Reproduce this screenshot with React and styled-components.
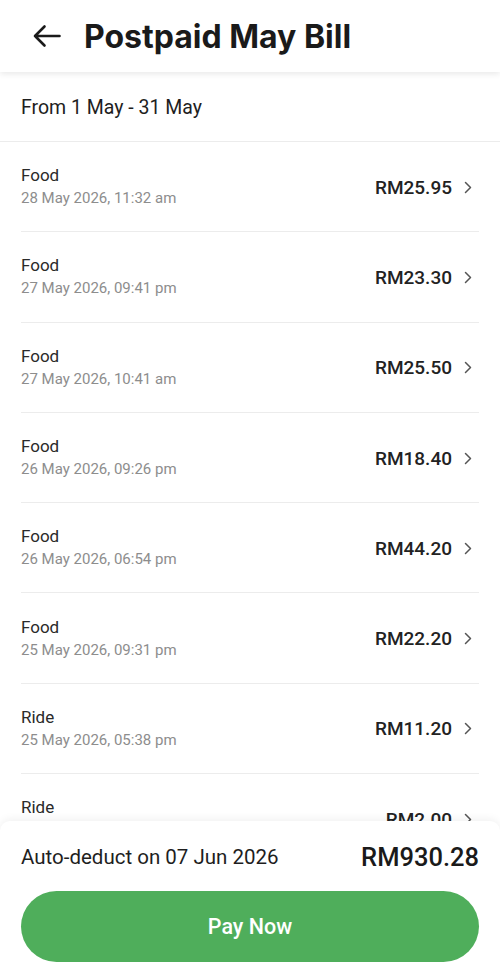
import React from "react";
import styled, { createGlobalStyle } from "styled-components";

const GlobalStyle = createGlobalStyle`
  html, body {
    margin: 0;
    padding: 0;
    background: #fff;
  }
  body {
    font-family: Roboto, "Noto Sans", Arial, sans-serif;
    color: #1c1c1c;
  }
`;

const Screen = styled.div`
  width: 500px;
  height: 974px;
  display: flex;
  flex-direction: column;
  overflow: hidden;
  background: #fff;
`;

const Header = styled.header`
  height: 72px;
  flex-shrink: 0;
  display: flex;
  align-items: center;
  gap: 23px;
  padding: 0 0 0 33px;
  background: #fff;
  box-shadow: 0 2px 6px rgba(0, 0, 0, 0.09);
  position: relative;
  z-index: 2;
`;

const BackButton = styled.button`
  border: none;
  background: none;
  padding: 0;
  display: flex;
  align-items: center;
  cursor: pointer;
`;

const Title = styled.h1`
  margin: 0;
  font-family: Inter, "Noto Sans", sans-serif;
  font-weight: 700;
  font-size: 32px;
  letter-spacing: 0;
  color: #1a1a1a;
`;

const Body = styled.div`
  flex: 1;
  overflow: hidden;
`;

const Period = styled.div`
  height: 67px;
  display: flex;
  align-items: center;
  padding: 2px 21px 0;
  font-size: 19.5px;
  color: #1e1e1e;
  border-bottom: 1px solid #ececec;
`;

const List = styled.ul`
  list-style: none;
  margin: 0;
  padding: 0 21px;
`;

const Row = styled.li`
  height: 89.3px;
  display: flex;
  align-items: center;
  justify-content: space-between;
  border-bottom: 1px solid #ececec;
`;

const Info = styled.div`
  display: flex;
  flex-direction: column;
  gap: 1px;
`;

const Kind = styled.span`
  font-size: 17px;
  line-height: 22px;
  color: #2a2a2a;
`;

const When = styled.span`
  font-size: 15px;
  line-height: 22px;
  color: #8d8d8d;
`;

const Amount = styled.div`
  display: flex;
  align-items: center;
  gap: 12px;
  padding-right: 7px;
  font-size: 19px;
  font-weight: 500;
  color: #222;
  margin-top: 1px;
`;

const Footer = styled.footer`
  flex-shrink: 0;
  background: #fff;
  border-radius: 10px 10px 0 0;
  box-shadow: 0 -2px 8px rgba(0, 0, 0, 0.06);
  padding: 21px 21px 12px;
  display: flex;
  flex-direction: column;
  gap: 19px;
  position: relative;
  z-index: 2;
`;

const Summary = styled.div`
  height: 30px;
  display: flex;
  align-items: center;
  justify-content: space-between;
`;

const DeductText = styled.span`
  font-size: 20.5px;
  color: #1e1e1e;
`;

const Total = styled.span`
  font-size: 25.5px;
  font-weight: 500;
  color: #1a1a1a;
`;

const PayButton = styled.button`
  height: 71px;
  border: none;
  border-radius: 36px;
  background: #4fae5b;
  color: #fff;
  font-family: Roboto, "Noto Sans", sans-serif;
  font-size: 21.5px;
  font-weight: 500;
  cursor: pointer;
`;

const transactions = [
  { kind: "Food", when: "28 May 2026, 11:32 am", amount: "RM25.95" },
  { kind: "Food", when: "27 May 2026, 09:41 pm", amount: "RM23.30" },
  { kind: "Food", when: "27 May 2026, 10:41 am", amount: "RM25.50" },
  { kind: "Food", when: "26 May 2026, 09:26 pm", amount: "RM18.40" },
  { kind: "Food", when: "26 May 2026, 06:54 pm", amount: "RM44.20" },
  { kind: "Food", when: "25 May 2026, 09:31 pm", amount: "RM22.20" },
  { kind: "Ride", when: "25 May 2026, 05:38 pm", amount: "RM11.20" },
  { kind: "Ride", when: "25 May 2026, 08:12 am", amount: "RM2.00" },
  { kind: "Food", when: "24 May 2026, 12:05 pm", amount: "RM19.80" },
];

function Chevron() {
  return (
    <svg width="8" height="13" viewBox="0 0 8 13" fill="none">
      <path d="M1.5 1.5 L6.5 6.5 L1.5 11.5" stroke="#555" strokeWidth="1.5" strokeLinecap="round" strokeLinejoin="round" />
    </svg>
  );
}

function BackArrow() {
  return (
    <svg width="28" height="24" viewBox="0 0 28 24" fill="none">
      <path d="M26.5 12 H2 M11.5 2.5 L2 12 L11.5 21.5" stroke="#1a1a1a" strokeWidth="2.6" strokeLinecap="round" strokeLinejoin="round" />
    </svg>
  );
}

export default function App() {
  return (
    <>
      <GlobalStyle />
      <Screen>
        <Header>
          <BackButton aria-label="Back">
            <BackArrow />
          </BackButton>
          <Title>Postpaid May Bill</Title>
        </Header>
        <Body>
          <Period>From 1 May - 31 May</Period>
          <List>
            {transactions.map((t, i) => (
              <Row key={i}>
                <Info>
                  <Kind>{t.kind}</Kind>
                  <When>{t.when}</When>
                </Info>
                <Amount>
                  {t.amount}
                  <Chevron />
                </Amount>
              </Row>
            ))}
          </List>
        </Body>
        <Footer>
          <Summary>
            <DeductText>Auto-deduct on 07 Jun 2026</DeductText>
            <Total>RM930.28</Total>
          </Summary>
          <PayButton>Pay Now</PayButton>
        </Footer>
      </Screen>
    </>
  );
}
